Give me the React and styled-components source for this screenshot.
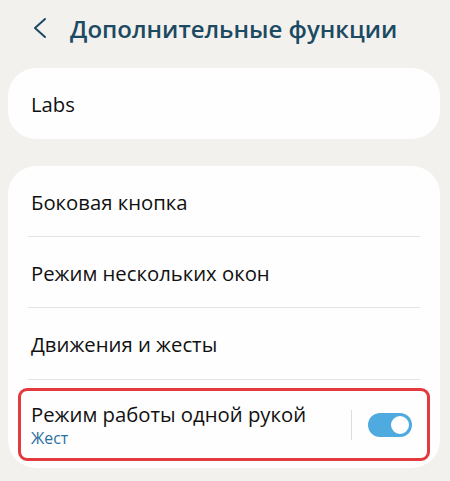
import React from "react";
import styled, { createGlobalStyle } from "styled-components";

const Global = createGlobalStyle`
  html, body { margin: 0; padding: 0; background: #f3f1ed; }
  body { font-family: "Open Sans", "Noto Sans", sans-serif; }
`;

const Page = styled.div`
  width: 450px;
  height: 481px;
  background: #f3f1ed;
  box-sizing: border-box;
  padding: 0 10px 0 8px;
  display: flex;
  flex-direction: column;
  overflow: hidden;
`;

const Header = styled.div`
  height: 56px;
  display: flex;
  align-items: center;
  padding-left: 24px;
  gap: 22px;
  margin-bottom: 12px;
`;

const Back = styled.svg`
  width: 16px;
  height: 24px;
  flex: none;
`;

const Title = styled.h1`
  margin: 0;
  font-size: 24px;
  font-weight: 600;
  color: #1c4a62;
  white-space: nowrap;
`;

const Card = styled.div`
  background: #fefefe;
  border-radius: ${(p) => p.$radius || 28}px;
  display: flex;
  flex-direction: column;
  margin-bottom: ${(p) => p.$mb || 0}px;
`;

const Row = styled.div`
  height: ${(p) => p.$h || 71}px;
  display: flex;
  align-items: center;
  padding: 0 23px;
  position: relative;
  box-sizing: border-box;
  ${(p) =>
    p.$divider &&
    `&::after{content:"";position:absolute;left:20px;right:20px;bottom:0;height:1px;background:#e4e4e4;}`}
`;

const Label = styled.span`
  font-size: 20.3px;
  color: #111;
`;

const Highlight = styled.div`
  margin: 8px 10px 7px 10px;
  border: 3px solid #e23a3f;
  border-radius: 9px;
  height: 73px;
  box-sizing: border-box;
  display: flex;
  align-items: center;
  padding: 0 15px 0 10px;
`;

const TextCol = styled.div`
  flex: 1;
  display: flex;
  flex-direction: column;
`;

const Sub = styled.span`
  font-size: 15.8px;
  color: #2a6f9e;
  margin-top: -1px;
`;

const VLine = styled.div`
  width: 1px;
  height: 30px;
  background: #dcdcdc;
  margin-right: 16px;
`;

const Switch = styled.div`
  width: 44px;
  height: 24px;
  border-radius: 12px;
  background: #4fabdf;
  position: relative;
  flex: none;
`;

const Thumb = styled.div`
  position: absolute;
  right: 1px;
  top: 1px;
  width: 22px;
  height: 22px;
  border-radius: 50%;
  background: #fff;
  box-sizing: border-box;
  border: 2px solid #4fabdf;
`;

export default function App() {
  return (
    <>
      <Global />
      <Page>
        <Header>
          <Back viewBox="0 0 16 24">
            <path d="M13 3 L3 12 L13 21" fill="none" stroke="#1c4a62" strokeWidth="2" strokeLinecap="round" strokeLinejoin="round" />
          </Back>
          <Title>Дополнительные функции</Title>
        </Header>
        <Card $mb={27}>
          <Row $h={71}>
            <Label>Labs</Label>
          </Row>
        </Card>
        <Card>
          <Row $divider>
            <Label>Боковая кнопка</Label>
          </Row>
          <Row $divider>
            <Label>Режим нескольких окон</Label>
          </Row>
          <Row $divider $h={72}>
            <Label>Движения и жесты</Label>
          </Row>
          <Highlight>
            <TextCol>
              <Label>Режим работы одной рукой</Label>
              <Sub>Жест</Sub>
            </TextCol>
            <VLine />
            <Switch>
              <Thumb />
            </Switch>
          </Highlight>
        </Card>
      </Page>
    </>
  );
}
